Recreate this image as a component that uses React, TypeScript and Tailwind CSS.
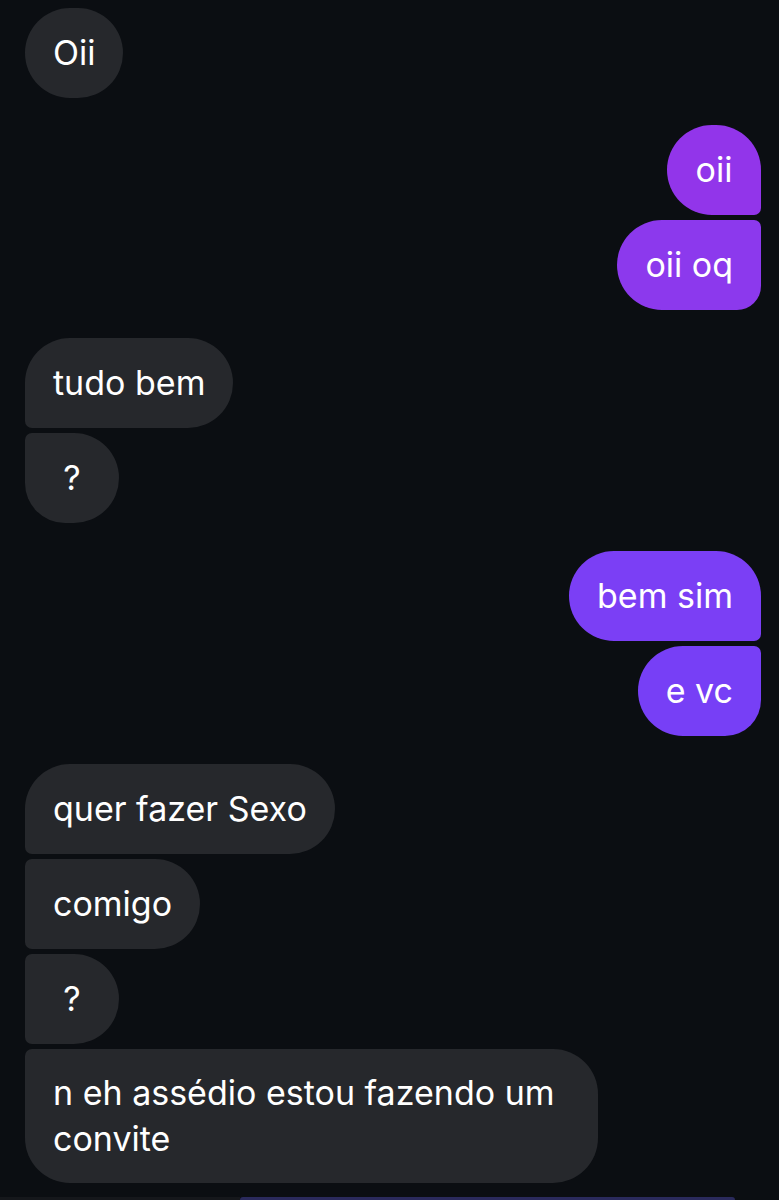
import React from "react";

type Msg = { text: string; me: boolean; cls: string; mt: string };

const msgs: Msg[] = [
  { text: "Oii", me: false, cls: "bg-[#26282c] rounded-[45px]", mt: "mt-[8px]" },
  { text: "oii", me: true, cls: "bg-[#9235ea] rounded-[45px] rounded-br-[7px]", mt: "mt-[27px]" },
  { text: "oii oq", me: true, cls: "bg-[#8c39ed] rounded-[45px] rounded-tr-[7px] rounded-br-[24px]", mt: "mt-[5px]" },
  { text: "tudo bem", me: false, cls: "bg-[#26282c] rounded-[45px] rounded-bl-[7px]", mt: "mt-[28px]" },
  { text: "?", me: false, cls: "bg-[#26282c] rounded-[45px] rounded-tl-[7px] rounded-bl-[40px]", mt: "mt-[5px]" },
  { text: "bem sim", me: true, cls: "bg-[#7b3ff5] rounded-[45px] rounded-br-[7px]", mt: "mt-[28px]" },
  { text: "e vc", me: true, cls: "bg-[#773ff6] rounded-[45px] rounded-tr-[7px] rounded-br-[36px]", mt: "mt-[5px]" },
  { text: "quer fazer Sexo", me: false, cls: "bg-[#26282c] rounded-[45px] rounded-bl-[7px]", mt: "mt-[28px]" },
  { text: "comigo", me: false, cls: "bg-[#26282c] rounded-[45px] rounded-tl-[7px] rounded-bl-[7px]", mt: "mt-[5px]" },
  { text: "?", me: false, cls: "bg-[#26282c] rounded-[45px] rounded-tl-[7px] rounded-bl-[7px]", mt: "mt-[5px]" },
];

export default function App() {
  return (
    <div
      className="w-[779px] h-[1200px] overflow-hidden bg-[#0b0e12] text-white flex flex-col"
      style={{ fontFamily: "Inter, 'Noto Sans', sans-serif" }}
    >
      {msgs.map((m, i) => (
        <div key={i} className={`flex ${m.me ? "justify-end pr-[18px]" : "justify-start pl-[25px]"} ${m.mt}`}>
          <div className={`${m.cls} min-w-[94px] h-[90px] px-[28px] flex items-center justify-center text-[34px] leading-[46px]`}>
            {m.text}
          </div>
        </div>
      ))}
      <div className="flex justify-start pl-[25px] mt-[5px]">
        <div className="bg-[#26282c] rounded-[45px] rounded-tl-[7px] w-[573px] py-[21px] px-[28px] text-[34px] leading-[46px]">
          n eh assédio estou fazendo um convite
        </div>
      </div>
      <div className="flex mt-[14px] h-[10px]">
        <div className="w-[240px] bg-[#15171b]" />
        <div className="w-[495px] bg-[#2a2a5c] rounded-t-[30px]" />
      </div>
    </div>
  );
}
